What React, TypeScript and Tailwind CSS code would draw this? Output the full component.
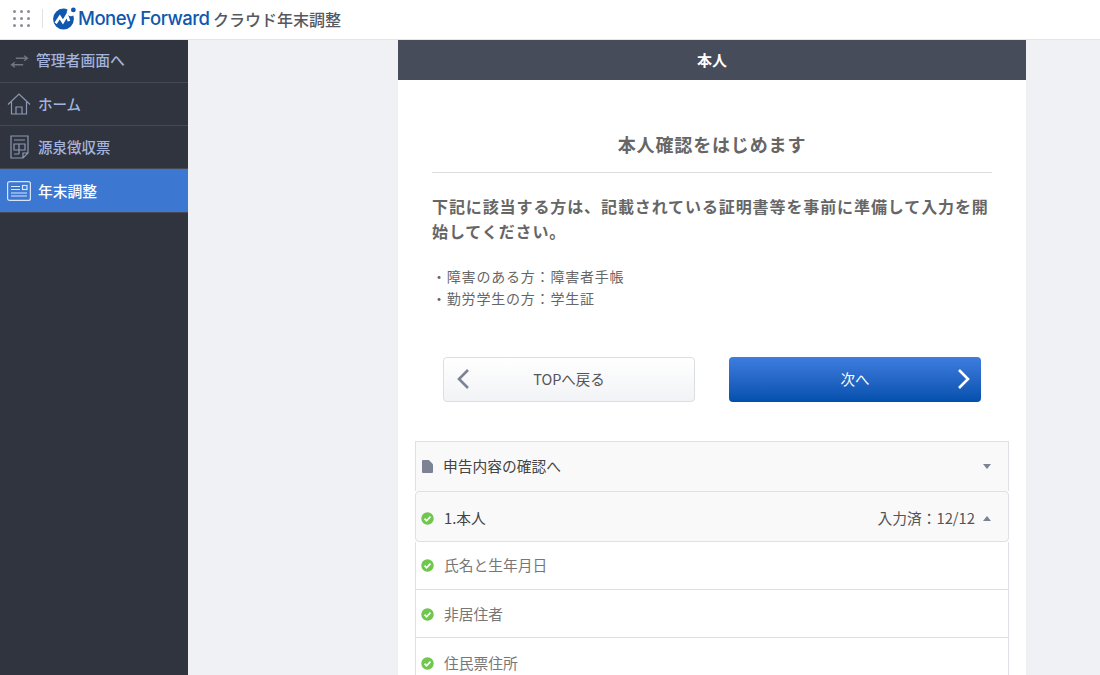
const jp = "[font-family:'Noto_Sans_CJK_JP','Noto_Sans',sans-serif]";

function CheckIcon() {
  return (
    <svg viewBox="0 0 14 14" className="h-[13px] w-[13px] shrink-0">
      <circle cx="7" cy="7" r="6.7" fill="#6fc74d" />
      <path d="M3.800 7.200 6 9.400l4.200-4.400" fill="none" stroke="#fff" strokeWidth="1.800" />
    </svg>
  );
}

function Caret({ up }: { up?: boolean }) {
  return (
    <svg viewBox="0 0 8 5" className="h-[5px] w-2 shrink-0">
      <path d={up ? "M4 0 8 5H0z" : "M0 0h8L4 5z"} fill="#7d8294" />
    </svg>
  );
}

function Logo() {
  return (
    <svg viewBox="0 0 24 24" className="h-[25px] w-[25px] shrink-0">
      <path d="M11 2.500a10 10 0 1 0 10 10c0-1.200-.2-2.300-.6-3.300a4 4 0 0 1-5.400-5.700A10 10 0 0 0 11 2.500z" fill="#0f58ae" />
      <circle cx="20.500" cy="3.800" r="2.300" fill="#0f58ae" />
      <path d="M3.500 16.500 7.500 10.500l3 4.700 3.800-6.200 2 5.500" fill="none" stroke="#fff" strokeWidth="2.600" />
    </svg>
  );
}

function Header() {
  return (
    <header className="flex h-10 items-center border-b border-[#e3e5ea] bg-white pb-[2px] pl-[13px]">
      <div className="grid grid-cols-3 gap-x-[4px] gap-y-[4px]">
        {[0, 1, 2, 3, 4, 5, 6, 7, 8].map((i) => (
          <span key={i} className="h-[3px] w-[3px] rounded-full bg-[#8a8d96]" />
        ))}
      </div>
      <div className="ml-[12px] h-[19px] w-px bg-[#dfe1e6]" />
      <div className="ml-[9px] flex items-center">
        <Logo />
        <span className="ml-[1px] w-[132px] font-['Inter'] text-[18.500px] font-medium tracking-[-0.5px] whitespace-nowrap text-[#0f58ae]">
          Money Forward
        </span>
      </div>
      <span className={`${jp} ml-[3px] text-[16px] font-medium text-[#55585f]`}>クラウド年末調整</span>
    </header>
  );
}

function Sidebar() {
  return (
    <aside className={`${jp} w-[188px] shrink-0 bg-[#2f343e] text-[14.500px] font-medium text-[#a3b3dc]`}>
      <div className="flex h-[43px] items-center border-b border-[#444955] pl-[10px]">
        <svg viewBox="0 0 20 14" className="h-[13px] w-[19px]" fill="none" stroke="#6f7681" strokeWidth="1.600">
          <path d="M6 3.500h12.500M15 .8l3.500 2.700L15 6.200M14 10.500H1.500M5 7.800l-3.500 2.700L5 13.200" />
        </svg>
        <span className="-mt-[2px] ml-[7px] text-[14.800px]">管理者画面へ</span>
      </div>
      <div className="flex h-[43px] items-center border-b border-[#444955] pl-[7px]">
        <svg viewBox="0 0 24 24" className="h-[24px] w-[24px]" fill="none" stroke="#8e98b4" strokeWidth="1.200">
          <path d="M1 12.500 12 2l11 10.500M4.500 10v12h15V10M9 22v-7h6v7" />
        </svg>
        <span className="ml-[7px]">ホーム</span>
      </div>
      <div className="flex h-[43px] items-center border-b border-[#444955] pl-[9px]">
        <svg viewBox="0 0 20 24" className="h-[24px] w-[20px]" fill="none" stroke="#8e98b4" strokeWidth="1.200">
          <path d="M2 1h17v17l-5 5H2zM5 5h11M5 9h11v6H5zM10 9v10M5 19h5M19 18h-5v5" />
        </svg>
        <span className="ml-[9px]">源泉徴収票</span>
      </div>
      <div className="flex h-[44px] items-center border-b border-[#444955] bg-[#3c78d2] pl-[7px] text-[14.750px] text-white">
        <svg viewBox="0 0 24 20" className="h-[20px] w-[24px]" fill="none" stroke="#d8e4f7" strokeWidth="1.200">
          <rect x="0.600" y="0.600" width="22.800" height="18.800" rx="2" />
          <path d="M4 5.500h9M4 8.500h9M4 12h16M4 15h16" />
          <rect x="15.500" y="4.500" width="4.500" height="4" />
        </svg>
        <span className="mt-[1px] ml-[7px]">年末調整</span>
      </div>
    </aside>
  );
}

function Row({ label, top, right, className }: { label: string; top?: boolean; right?: boolean; className?: string }) {
  return (
    <div
      className={`flex items-center border-x border-b border-[#dfe0e5] pl-[5px] ${
        top ? "h-[51px] rounded-[4px] border-t bg-[#f9f9fa] pt-[3px] text-[#444]" : "text-[#777]"
      } ${className ?? ""}`}
    >
      <CheckIcon />
      <span className="ml-[10px] text-[14.750px]">{label}</span>
      {right && (
        <div className="ml-auto flex items-center pr-[17px] text-[14.750px] text-[#555]">
          入力済：12/12
          <span className="ml-[8px]">
            <Caret up />
          </span>
        </div>
      )}
    </div>
  );
}

export default function App() {
  return (
    <div className={`${jp} flex h-[675px] flex-col overflow-hidden bg-white`}>
      <Header />
      <div className="flex min-h-0 flex-1">
        <Sidebar />
        <main className="min-w-0 flex-1 bg-[#f0f1f5] pl-[210px]">
          <div className="h-full w-[628px] bg-white">
            <div className="flex h-10 items-center justify-center bg-[#474c5b] text-[15px] font-bold text-white">本人</div>
            <div className="px-[34px] pt-[49px]">
              <h1 className="border-b border-[#dcdcdc] pb-[13px] text-center text-[18px] leading-[30px] font-bold tracking-[0.85px] text-[#666]">
                本人確認をはじめます
              </h1>
              <p className="mt-[21px] text-[16px] leading-[25px] font-bold tracking-[0.9px] text-[#666]">
                下記に該当する方は、記載されている証明書等を事前に準備して入力を開始してください。
              </p>
              <div className="mt-[21px] text-[14px] leading-[22px] tracking-[0.8px] text-[#666]">
                <p>・障害のある方：障害者手帳</p>
                <p>・勤労学生の方：学生証</p>
              </div>
            </div>
            <div className="mt-[48px] flex gap-[34px] pl-[45px]">
              <button className="relative flex h-[45px] w-[252px] items-center justify-center rounded-[4px] border border-[#dcdee3] bg-linear-to-b from-white to-[#f2f3f6] pb-[1px] text-[14.500px] text-[#555]">
                <svg viewBox="0 0 14 22" className="absolute left-[12px] h-[22px] w-[14px]" fill="none" stroke="#7d8396" strokeWidth="2.600">
                  <path d="M12 2 3 11l9 9" />
                </svg>
                TOPへ戻る
              </button>
              <button className="relative flex h-[45px] w-[252px] items-center justify-center rounded-[4px] bg-linear-to-b from-[#3d7de0] to-[#0250ac] pb-[1px] text-[14.500px] text-white">
                次へ
                <svg viewBox="0 0 14 22" className="absolute right-[10px] h-[22px] w-[14px]" fill="none" stroke="#fff" strokeWidth="2.600">
                  <path d="M2 2l9 9-9 9" />
                </svg>
              </button>
            </div>
            <div className="mt-[39px] ml-[17px] w-[594px]">
              <div className="flex h-[50px] items-center border-x border-t border-[#dfe0e5] bg-[#f9f9fa] pr-[17px] pl-[5px] text-[#444]">
                <svg viewBox="0 0 12 14" className="ml-[1px] h-[13px] w-[11px] shrink-0" fill="#7d8294">
                  <path d="M1 0h6.500L12 4.500V13a1 1 0 0 1-1 1H1a1 1 0 0 1-1-1V1a1 1 0 0 1 1-1z" />
                </svg>
                <span className="ml-[10px] text-[14.750px]">申告内容の確認へ</span>
                <span className="ml-auto">
                  <Caret />
                </span>
              </div>
              <Row label="1.本人" top right />
              <Row label="氏名と生年月日" className="h-[48px]" />
              <Row label="非居住者" className="h-[48px] pt-[2px]" />
              <Row label="住民票住所" className="h-[48px] border-b-0 pt-[2px]" />
            </div>
          </div>
        </main>
      </div>
    </div>
  );
}
